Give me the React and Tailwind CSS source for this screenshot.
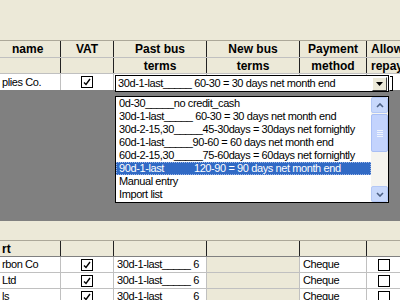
import React from 'react'

const cols = 'grid grid-cols-[61px_53px_93px_93px_67px_33px]'
const font = { fontFamily: '"Liberation Sans", Arial, sans-serif' }
const body = 'text-[11px] tracking-[-0.4px]'

function Check({ checked }) {
  return (
    <div className="w-[12px] h-[12px] border border-black bg-white flex items-center justify-center">
      {checked && (
        <svg width="8" height="8" viewBox="0 0 8 8">
          <path d="M1 4.5 L3 6.5 L7 1" stroke="black" strokeWidth="1.4" fill="none" />
        </svg>
      )}
    </div>
  )
}

function HeadCell({ children, className = '' }) {
  return (
    <div className={`h-full border-r border-[#222] text-[12px] font-bold text-black flex items-center overflow-hidden whitespace-nowrap ${className}`}>
      {children}
    </div>
  )
}

function Cell({ children, className = '' }) {
  return (
    <div className={`h-full border-r border-[#c0c0c0] ${body} text-black flex items-center overflow-hidden whitespace-nowrap ${className}`}>
      {children}
    </div>
  )
}

const options = [
  '0d-30_____no credit_cash',
  '30d-1-last_____ 60-30 = 30 days net month end',
  '30d-2-15,30_____45-30days = 30days net fornightly',
  '60d-1-last_____90-60 = 60 days net month end',
  '60d-2-15,30_____75-60days = 60days net fornightly',
  '90d-1-last',
  'Manual entry',
  'Import list',
]

function DataRow({ name }) {
  return (
    <div className={`${cols} h-[16px] bg-white border-b border-[#c0c0c0]`}>
      <Cell className="pl-[2px]">{name}</Cell>
      <Cell className="justify-center"><Check checked /></Cell>
      <Cell className="pl-[3px]">30d-1-last_____ 6</Cell>
      <Cell className="bg-[#ece9d8]" />
      <Cell className="pl-[3px]">Cheque</Cell>
      <Cell className="justify-center border-r-0"><Check /></Cell>
    </div>
  )
}

export default function App() {
  return (
    <div className="relative w-[400px] h-[300px] overflow-hidden bg-[#ece9d8]" style={font}>
      <div className="h-[41px] border-b border-[#aca899]" />

      <div className={`${cols} h-[17px] border-b border-[#c0c0c0]`}>
        <HeadCell className="pl-[12px]">name</HeadCell>
        <HeadCell className="justify-center">VAT</HeadCell>
        <HeadCell className="justify-center">Past bus</HeadCell>
        <HeadCell className="justify-center">New bus</HeadCell>
        <HeadCell className="justify-center">Payment</HeadCell>
        <HeadCell className="pl-[4px] border-r-0">Allow</HeadCell>
      </div>
      <div className={`${cols} h-[16px] border-b border-[#c0c0c0]`}>
        <HeadCell />
        <HeadCell />
        <HeadCell className="justify-center">terms</HeadCell>
        <HeadCell className="justify-center">terms</HeadCell>
        <HeadCell className="justify-center">method</HeadCell>
        <HeadCell className="pl-[4px] border-r-0">repay</HeadCell>
      </div>
      <div className={`${cols} h-[16px] bg-white`}>
        <Cell className="pl-[2px]">plies Co.</Cell>
        <Cell className="justify-center"><Check checked /></Cell>
        <Cell />
        <Cell />
        <Cell />
        <Cell className="border-r-0" />
      </div>

      <div className="h-[131px] bg-[#808080]" />

      <div className="h-[20px] border-b border-[#aca899]" />
      <div className={`${cols} h-[16px] border-b border-[#808080]`}>
        <HeadCell className="pl-[2px]">rt</HeadCell>
        <HeadCell />
        <HeadCell />
        <HeadCell />
        <HeadCell />
        <HeadCell className="border-r-0" />
      </div>
      <DataRow name="rbon Co" />
      <DataRow name="Ltd" />
      <DataRow name="ls" />

      {/* combo box */}
      <div className={`absolute left-[115px] top-[75px] w-[274px] h-[17px] bg-white border border-black flex items-center ${body}`}>
        <span className="pl-[2px] whitespace-nowrap flex-1 overflow-hidden">30d-1-last_____ 60-30 = 30 days net month end</span>
        <div className="w-[15px] h-[14px] mr-[1px] bg-[#ece9d8] border border-t-white border-l-white border-r-[#404040] border-b-[#404040] flex items-center justify-center">
          <svg width="7" height="4" viewBox="0 0 7 4"><path d="M0 0 H7 L3.5 4 Z" fill="black" /></svg>
        </div>
      </div>
      <div className="absolute left-[390px] top-[76px] w-[3px] h-[15px] border border-l-0 border-black" />

      {/* dropdown list */}
      <div className={`absolute left-[115px] top-[96px] w-[274px] h-[107px] bg-white border border-black flex ${body}`}>
        <div className="flex-1 flex flex-col">
          {options.map((o, i) =>
            i === 5 ? (
              <div key={i} className="h-[13px] leading-[11px] pl-[2px] whitespace-nowrap bg-[#316ac5] text-white border border-dotted border-[#9db6e6]">
                90d-1-last<span className="inline-block w-[30px]" />120-90 = 90 days net month end
              </div>
            ) : (
              <div key={i} className="h-[13px] leading-[13px] pl-[3px] whitespace-nowrap text-black">{o}</div>
            )
          )}
        </div>
        <div className="w-[17px] bg-[#f5f4ef] flex flex-col">
          <div className="h-[16px] rounded-[2px] bg-[#c8d8fb] border border-[#b4c8f6] flex items-center justify-center">
            <svg width="8" height="5" viewBox="0 0 8 5"><path d="M1 4 L4 1 L7 4" stroke="#4d6185" strokeWidth="1.6" fill="none" /></svg>
          </div>
          <div className="h-[38px] mt-[1px] rounded-[2px] bg-[#c3d3fd] border border-[#a9bff5] flex flex-col items-center justify-center gap-[1px]">
            <div className="w-[6px] h-[1px] bg-[#eef4fe]" />
            <div className="w-[6px] h-[1px] bg-[#eef4fe]" />
            <div className="w-[6px] h-[1px] bg-[#eef4fe]" />
            <div className="w-[6px] h-[1px] bg-[#eef4fe]" />
          </div>
          <div className="flex-1" />
          <div className="h-[16px] rounded-[2px] bg-[#c8d8fb] border border-[#b4c8f6] flex items-center justify-center">
            <svg width="8" height="5" viewBox="0 0 8 5"><path d="M1 1 L4 4 L7 1" stroke="#4d6185" strokeWidth="1.6" fill="none" /></svg>
          </div>
        </div>
      </div>
    </div>
  )
}
